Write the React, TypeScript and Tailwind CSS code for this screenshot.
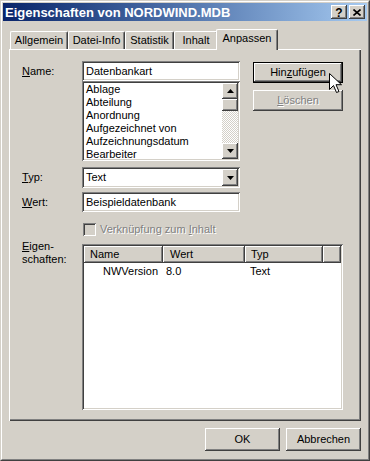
import React from "react";

const raised =
  "shadow-[inset_-1px_-1px_#404040,inset_1px_1px_#ffffff,inset_-2px_-2px_#808080,inset_2px_2px_#d4d0c8]";
const sunken =
  "shadow-[inset_1px_1px_#808080,inset_-1px_-1px_#ffffff,inset_2px_2px_#404040,inset_-2px_-2px_#d4d0c8]";

function Arrow({ dir }: { dir: "up" | "down" }) {
  return (
    <svg width="7" height="4" viewBox="0 0 7 4" className="block">
      {dir === "down" ? (
        <path d="M0 0h7L3.5 4z" fill="#000" />
      ) : (
        <path d="M0 4h7L3.5 0z" fill="#000" />
      )}
    </svg>
  );
}

function Tab({ label, w }: { label: string; w: string }) {
  return (
    <div
      className={`${w} h-[18px] border-t border-l border-r border-t-white border-l-white border-r-[#404040] rounded-t-[2px] shadow-[inset_-1px_0_#808080] flex items-center justify-center pb-[1px]`}
    >
      {label}
    </div>
  );
}

const listItems = [
  "Ablage",
  "Abteilung",
  "Anordnung",
  "Aufgezeichnet von",
  "Aufzeichnungsdatum",
  "Bearbeiter",
];

export default function App() {
  return (
    <div className="relative w-[370px] h-[461px] bg-[#d4d0c8] border border-t-[#d4d0c8] border-l-[#d4d0c8] border-r-[#404040] border-b-[#404040] font-['Liberation_Sans',Arial,sans-serif] text-[11px] text-black leading-[13px] select-none">
      <div className="h-full flex flex-col p-px border border-t-white border-l-white border-r-[#808080] border-b-[#808080]">
        {/* title bar */}
        <div className="h-[18px] flex items-center justify-between bg-gradient-to-r from-[#0a246a] to-[#a6caf0] pl-[2px] pr-[2px]">
          <span className="font-bold text-white text-[13px] leading-none">Eigenschaften von NORDWIND.MDB</span>
          <div className="flex gap-[2px]">
            <div className={`w-[16px] h-[14px] bg-[#d4d0c8] ${raised} flex items-center justify-center font-bold text-[12px] leading-none pt-[1px]`}>
              ?
            </div>
            <div className={`w-[16px] h-[14px] bg-[#d4d0c8] ${raised} flex items-center justify-center`}>
              <svg width="8" height="7" viewBox="0 0 8 7">
                <path d="M0.5 0.5l7 6M7.5 0.5l-7 6" stroke="#000" strokeWidth="1.6" />
              </svg>
            </div>
          </div>
        </div>

        <div className="flex flex-col px-[6px]">
          {/* tabs */}
          <div className="mt-[8px] h-[20px] flex items-end pl-[1px]">
            <Tab label="Allgemein" w="w-[58px]" />
            <Tab label="Datei-Info" w="w-[57px]" />
            <Tab label="Statistik" w="w-[49px]" />
            <Tab label="Inhalt" w="w-[44px]" />
            <div className="relative z-10 -ml-[2px] -mb-[1px] w-[62px] h-[21px] bg-[#d4d0c8] border-t border-l border-r border-t-white border-l-white border-r-[#404040] rounded-t-[2px] shadow-[inset_-1px_0_#808080] flex items-center justify-center pb-[3px]">
              Anpassen
            </div>
          </div>

          {/* panel */}
          <div className="h-[372px] shadow-[inset_1px_1px_#ffffff,inset_-1px_-1px_#404040,inset_-2px_-2px_#808080] pt-[12px] pl-[13px] flex flex-col">
            <div className="flex">
              <div className="w-[60px] pt-[4px]">
                <u>N</u>ame:
              </div>
              <div className="w-[158px] flex flex-col">
                <div className={`h-[20px] bg-white ${sunken} pl-[4px] flex items-center`}>Datenbankart</div>
                <div className={`h-[80px] bg-white ${sunken} p-[2px] flex`}>
                  <div className="flex-1 pl-[2px] overflow-hidden">
                    {listItems.map((t) => (
                      <div key={t} className="h-[13px] leading-[13px]">
                        {t}
                      </div>
                    ))}
                  </div>
                  <div className="w-[16px] flex flex-col">
                    <div className={`h-[16px] bg-[#d4d0c8] ${raised} flex items-center justify-center`}>
                      <Arrow dir="up" />
                    </div>
                    <div className={`h-[12px] bg-[#d4d0c8] ${raised}`} />
                    <div className="flex-1 bg-[repeating-conic-gradient(#d4d0c8_0_25%,#ffffff_0_50%)] bg-[length:2px_2px]" />
                    <div className={`h-[16px] bg-[#d4d0c8] ${raised} flex items-center justify-center`}>
                      <Arrow dir="down" />
                    </div>
                  </div>
                </div>
              </div>
              <div className="ml-[13px] w-[90px] pt-[1px] flex flex-col gap-[7px]">
                <div className="h-[21px] border border-black">
                  <div className={`h-full bg-[#d4d0c8] ${raised} flex items-center justify-center`}>
                    <span>
                      Hin<u>z</u>ufügen
                    </span>
                  </div>
                </div>
                <div className={`h-[21px] bg-[#d4d0c8] ${raised} flex items-center justify-center text-[#808080] [text-shadow:1px_1px_#ffffff]`}>
                  <span>
                    <u>L</u>öschen
                  </span>
                </div>
              </div>
            </div>

            <div className="flex mt-[6px]">
              <div className="w-[60px] pt-[4px]">
                <u>T</u>yp:
              </div>
              <div className={`w-[158px] h-[21px] bg-white ${sunken} p-[2px] flex`}>
                <div className="flex-1 pl-[2px] flex items-center">Text</div>
                <div className={`w-[16px] bg-[#d4d0c8] ${raised} flex items-center justify-center`}>
                  <Arrow dir="down" />
                </div>
              </div>
            </div>

            <div className="flex mt-[4px]">
              <div className="w-[60px] pt-[4px]">
                <u>W</u>ert:
              </div>
              <div className={`w-[158px] h-[20px] bg-white ${sunken} pl-[4px] flex items-center`}>
                Beispieldatenbank
              </div>
            </div>

            <div className="flex items-center mt-[11px] pl-[61px] h-[13px]">
              <div className={`w-[13px] h-[13px] bg-[#d4d0c8] ${sunken}`} />
              <span className="ml-[4px] text-[#808080] [text-shadow:1px_1px_#ffffff]">
                Verknüpfung zum <u>I</u>nhalt
              </span>
            </div>

            <div className="flex mt-[8px]">
              <div className="w-[60px] leading-[13px] -mt-[4px]">
                <u>E</u>igen-
                <br />
                schaften:
              </div>
              <div className={`w-[261px] h-[166px] bg-white ${sunken} p-[2px] flex flex-col`}>
                <div className="h-[17px] flex">
                  <div className={`w-[79px] bg-[#d4d0c8] ${raised} pl-[6px] flex items-center`}>Name</div>
                  <div className={`w-[82px] bg-[#d4d0c8] ${raised} pl-[7px] flex items-center`}>Wert</div>
                  <div className={`w-[78px] bg-[#d4d0c8] ${raised} pl-[6px] flex items-center`}>Typ</div>
                  <div className={`flex-1 bg-[#d4d0c8] ${raised}`} />
                </div>
                <div className="h-[16px] flex items-center">
                  <div className="w-[79px] pl-[19px]">NWVersion</div>
                  <div className="w-[82px] pl-[3px]">8.0</div>
                  <div className="w-[78px] pl-[5px]">Text</div>
                </div>
              </div>
            </div>
          </div>

          {/* footer */}
          <div className="mt-[7px] flex justify-end gap-[6px]">
            <div className={`w-[75px] h-[23px] bg-[#d4d0c8] ${raised} flex items-center justify-center`}>OK</div>
            <div className={`w-[75px] h-[23px] bg-[#d4d0c8] ${raised} flex items-center justify-center`}>Abbrechen</div>
          </div>
        </div>
      </div>

      {/* mouse cursor */}
      <svg className="absolute left-[328px] top-[72px]" width="13" height="21" viewBox="0 0 13 21">
        <path
          d="M0.5 0.5v16l4-4 3 7 2.5-1-3-6.8h5.5z"
          fill="#fff"
          stroke="#000"
          strokeWidth="1"
          strokeLinejoin="miter"
        />
      </svg>
    </div>
  );
}
